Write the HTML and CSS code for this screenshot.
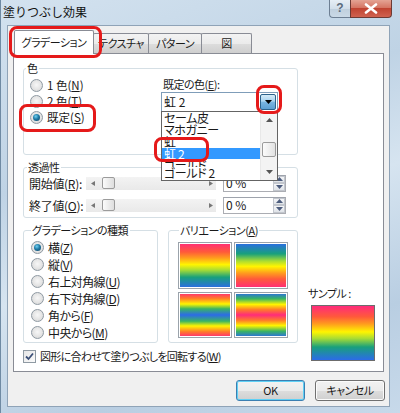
FILE: index.html
```html
<!DOCTYPE html>
<html lang="ja">
<head>
<meta charset="utf-8">
<title>塗りつぶし効果</title>
<link rel="stylesheet" href="styles.css">
</head>
<body>
<div class="window">
  <div class="titlebar">
    <span class="title">塗りつぶし効果</span>
    <div class="caption">
      <div class="cap-help">?</div>
      <div class="cap-close">
        <svg width="14" height="11" viewBox="0 0 14 11"><path d="M2 1.5 L12 9.5 M12 1.5 L2 9.5" stroke="#fff" stroke-width="2.6" stroke-linecap="round"/></svg>
      </div>
    </div>
  </div>
  <div class="client">
    <div class="tabs">
      <div class="tab active">グラデーション</div>
      <div class="tab t-tex">テクスチャ</div>
      <div class="tab t-pat">パターン</div>
      <div class="tab t-fig">図</div>
    </div>
    <div class="panel">
      <div class="main-col">
        <fieldset class="group g-color">
          <legend>色</legend>
          <div class="color-body">
            <div class="radios">
              <div class="radio"><span class="rb"></span>1&nbsp;色(<u>N</u>)</div>
              <div class="radio"><span class="rb"></span>2&nbsp;色(<u>T</u>)</div>
              <div class="radio"><span class="rb on"></span>既定(<u>S</u>)</div>
            </div>
            <div class="preset">
              <div class="preset-label">既定の色(<u>E</u>):</div>
              <div class="combo">
                <span class="combo-text">虹 2</span>
                <span class="combo-btn"><svg width="7" height="4" viewBox="0 0 7 4"><path d="M0 0 H7 L3.5 4 Z" fill="#000"/></svg></span>
              </div>
            </div>
          </div>
        </fieldset>

        <fieldset class="group g-trans">
          <legend>透過性</legend>
          <div class="trow">
            <span class="tlabel">開始値(<u>R</u>):</span>
            <div class="slider">
              <svg class="sarrow" width="4" height="5" viewBox="0 0 4 5"><path d="M4 0 V5 L0 2.5 Z" fill="#777"/></svg>
              <span class="thumb"></span>
              <span class="strack"></span>
              <svg class="sarrow" width="4" height="5" viewBox="0 0 4 5"><path d="M0 0 V5 L4 2.5 Z" fill="#777"/></svg>
            </div>
            <div class="spin">
              <span class="spin-text">0 %</span>
              <span class="spin-btns">
                <span class="sb"><svg width="7" height="4" viewBox="0 0 7 4"><path d="M0 4 H7 L3.5 0 Z" fill="#4d5d7e"/></svg></span>
                <span class="sb"><svg width="7" height="4" viewBox="0 0 7 4"><path d="M0 0 H7 L3.5 4 Z" fill="#4d5d7e"/></svg></span>
              </span>
            </div>
          </div>
          <div class="trow">
            <span class="tlabel">終了値(<u>O</u>):</span>
            <div class="slider">
              <svg class="sarrow" width="4" height="5" viewBox="0 0 4 5"><path d="M4 0 V5 L0 2.5 Z" fill="#777"/></svg>
              <span class="thumb"></span>
              <span class="strack"></span>
              <svg class="sarrow" width="4" height="5" viewBox="0 0 4 5"><path d="M0 0 V5 L4 2.5 Z" fill="#777"/></svg>
            </div>
            <div class="spin">
              <span class="spin-text">0 %</span>
              <span class="spin-btns">
                <span class="sb"><svg width="7" height="4" viewBox="0 0 7 4"><path d="M0 4 H7 L3.5 0 Z" fill="#4d5d7e"/></svg></span>
                <span class="sb"><svg width="7" height="4" viewBox="0 0 7 4"><path d="M0 0 H7 L3.5 4 Z" fill="#4d5d7e"/></svg></span>
              </span>
            </div>
          </div>
        </fieldset>

        <div class="row3">
          <fieldset class="group g-type">
            <legend>グラデーションの種類</legend>
            <div class="radio"><span class="rb on"></span>横(<u>Z</u>)</div>
            <div class="radio"><span class="rb"></span>縦(<u>V</u>)</div>
            <div class="radio"><span class="rb"></span>右上対角線(<u>U</u>)</div>
            <div class="radio"><span class="rb"></span>右下対角線(<u>D</u>)</div>
            <div class="radio"><span class="rb"></span>角から(<u>F</u>)</div>
            <div class="radio"><span class="rb"></span>中央から(<u>M</u>)</div>
          </fieldset>
          <fieldset class="group g-var">
            <legend>バリエーション(<u>A</u>)</legend>
            <div class="swatches">
              <div class="sw sw1"></div>
              <div class="sw sw2"></div>
              <div class="sw sw3"></div>
              <div class="sw sw4"></div>
            </div>
          </fieldset>
        </div>

        <div class="check">
          <span class="cb"><svg width="9" height="9" viewBox="0 0 9 9"><path d="M1 4.5 L3.5 7 L8 1.5" fill="none" stroke="#3b4f77" stroke-width="1.8"/></svg></span>
          図形に合わせて塗りつぶしを回転する(<u>W</u>)
        </div>
      </div>
      <div class="sample-col">
        <div class="sample-label">サンプル :</div>
        <div class="sample"></div>
      </div>
    </div>
    <div class="buttons">
      <div class="btn default">OK</div>
      <div class="btn">キャンセル</div>
    </div>
  </div>

  <div class="droplist">
    <div class="items">
      <div class="item">セーム皮</div>
      <div class="item">マホガニー</div>
      <div class="item">虹</div>
      <div class="item sel">虹 2</div>
      <div class="item clip">ゴールド</div>
      <div class="item">ゴールド 2</div>
    </div>
    <div class="vscroll">
      <span class="vs-btn"><svg width="7" height="4" viewBox="0 0 7 4"><path d="M0 4 H7 L3.5 0 Z" fill="#555"/></svg></span>
      <span class="vs-track"><span class="vs-thumb"></span></span>
      <span class="vs-btn"><svg width="7" height="4" viewBox="0 0 7 4"><path d="M0 0 H7 L3.5 4 Z" fill="#555"/></svg></span>
    </div>
  </div>

  <div class="mark mark-tab"></div>
  <div class="mark mark-preset"></div>
  <div class="mark mark-btn"></div>
  <div class="mark mark-item"></div>
</div>
</body>
</html>
```

FILE: styles.css
```css
html, body {
  margin: 0;
  padding: 0;
  background: #ffffff;
}
body {
  font-family: "Noto Sans CJK JP", "Liberation Sans", sans-serif;
  font-size: 11px;
  letter-spacing: -0.5px;
  color: #1a1a1a;
  font-feature-settings: "palt";
}
u { text-decoration: underline; text-underline-offset: 1px; }

.window {
  position: relative;
  width: 400px;
  height: 413px;
  box-sizing: border-box;
  display: flex;
  flex-direction: column;
  overflow: hidden;
  background: linear-gradient(160deg, #d3e2ef 0%, #bfd3e5 35%, #d6e4f0 55%, #b9cee2 80%, #c7d9ea 100%);
  border-left: 1px solid #6f8aa3;
}

/* title bar */
.titlebar {
  height: 25px;
  flex: none;
  display: flex;
  align-items: flex-start;
  justify-content: space-between;
}
.title {
  padding: 4px 0 0 2px;
  line-height: 16px;
  font-size: 12px;
  letter-spacing: 0;
  font-feature-settings: normal;
  color: #111;
}
.caption {
  display: flex;
  margin-right: 8px;
}
.cap-help {
  width: 21px;
  height: 18px;
  box-sizing: border-box;
  border: 1px solid #6d7f93;
  border-top: none;
  border-right: none;
  border-radius: 0 0 0 4px;
  background: linear-gradient(#e6eef5 0%, #d3dfea 50%, #bfcfdd 51%, #cad9e6 100%);
  color: #5b6b7c;
  font-family: "Liberation Sans", sans-serif;
  font-weight: bold;
  font-size: 12px;
  letter-spacing: 0;
  line-height: 17px;
  text-align: center;
}
.cap-close {
  width: 42px;
  height: 18px;
  box-sizing: border-box;
  border: 1px solid #6d3a34;
  border-top: none;
  border-radius: 0 0 4px 0;
  background: linear-gradient(#e4a394 0%, #d57563 45%, #c04331 50%, #d0624f 100%);
  display: flex;
  align-items: center;
  justify-content: center;
}

/* client */
.client {
  flex: 1;
  margin: 0 10px 6px 6px;
  border: 1px solid #8fa3b7;
  background: #f0f0f0;
  padding: 4px 5px 5px 5px;
  display: flex;
  flex-direction: column;
}

.tabs {
  height: 23px;
  display: flex;
  align-items: flex-end;
  padding-left: 1px;
  position: relative;
  z-index: 2;
}
.tab {
  height: 20px;
  box-sizing: border-box;
  border: 1px solid #898c95;
  border-bottom: none;
  border-radius: 2px 2px 0 0;
  background: linear-gradient(#f3f3f3 0%, #ebebeb 50%, #dddddd 51%, #cfcfcf 100%);
  text-align: center;
  line-height: 19px;
  margin-left: -1px;
}
.tab.active {
  height: 24px;
  width: 80px;
  margin-bottom: -1px;
  margin-left: 0;
  background: #ffffff;
  line-height: 22px;
  position: relative;
  z-index: 3;
}
.t-tex { width: 56px; }
.t-pat { width: 54px; }
.t-fig { width: 51px; }

.panel {
  height: 319px;
  box-sizing: border-box;
  background: #ffffff;
  border: 1px solid #898c95;
  padding: 7px 0 0 9px;
  display: flex;
}
.main-col {
  width: 275px;
  display: flex;
  flex-direction: column;
}

.group {
  margin: 0;
  padding: 0;
  border: 1px solid #d5dfe5;
  border-radius: 3px;
  min-width: 0;
  box-sizing: border-box;
}
.group legend {
  padding: 0 1px;
  margin-left: 2px;
  line-height: 14px;
  font-size: 11px;
}

/* color group */
.g-color { height: 94px; }
.color-body {
  display: flex;
  padding-top: 2px;
}
.radios {
  width: 131px;
  padding-left: 6px;
}
.radio {
  display: flex;
  align-items: center;
  height: 16px;
  line-height: 16px;
  white-space: nowrap;
}
.radios .radio { letter-spacing: 0; font-size: 11.5px; }
.rb {
  width: 11px;
  height: 11px;
  border-radius: 50%;
  border: 1px solid #8f9aa3;
  background: radial-gradient(circle at 50% 45%, #f7f7f7 0%, #e4e4e4 55%, #cfcfcf 100%);
  margin-right: 4px;
  flex: none;
  position: relative;
}
.rb.on::after {
  content: "";
  position: absolute;
  left: 2px;
  top: 2px;
  width: 7px;
  height: 7px;
  border-radius: 50%;
  background: radial-gradient(circle at 40% 35%, #6fd0f2 0%, #1f7aa5 45%, #0d3d5e 100%);
}
.preset {
  padding-top: 0;
}
.preset-label {
  line-height: 14px;
  padding-left: 2px;
}
.combo {
  margin-top: 1px;
  width: 117px;
  height: 20px;
  box-sizing: border-box;
  border: 1px solid #7f9db9;
  background: #fff;
  display: flex;
  align-items: center;
  justify-content: space-between;
}
.combo-text { padding-left: 2px; line-height: 16px; font-size: 12px; letter-spacing: 0; }
.combo-btn {
  width: 16px;
  height: 16px;
  margin-right: 1px;
  box-sizing: border-box;
  border: 1px solid #2c628b;
  border-radius: 2px;
  background: linear-gradient(#d5ebf8 0%, #a9d3ef 45%, #79b6e2 50%, #5c9fd3 100%);
  display: flex;
  align-items: center;
  justify-content: center;
}

/* transparency */
.g-trans {
  height: 58px;
  margin-top: 5px;
}
.g-trans legend { margin-left: 3px; }
.trow {
  display: flex;
  align-items: center;
  height: 16px;
  margin-top: 1px;
}
.trow + .trow { margin-top: 6px; }
.tlabel {
  width: 62px;
  padding-left: 5px;
  box-sizing: border-box;
  white-space: nowrap;
  font-size: 12px;
  letter-spacing: -0.3px;
}
.slider {
  width: 130px;
  height: 13px;
  background: linear-gradient(#f3f3f3, #e9e9e9);
  display: flex;
  align-items: center;
  padding: 0 3px 0 5px;
  box-sizing: border-box;
}
.thumb {
  width: 13px;
  height: 12px;
  margin-left: 7px;
  box-sizing: border-box;
  border: 1px solid #9b9b9b;
  border-radius: 2px;
  background: linear-gradient(90deg, #fbfbfb 0%, #ececec 50%, #dedede 100%);
}
.strack { flex: 1; }
.spin {
  margin-left: 7px;
  width: 63px;
  height: 17px;
  box-sizing: border-box;
  border: 1px solid #abadb3;
  border-top-color: #9ea3ac;
  background: #fff;
  display: flex;
  align-items: center;
  justify-content: space-between;
}
.spin-text { padding-left: 2px; line-height: 14px; font-size: 12px; letter-spacing: 0; }
.spin-btns {
  width: 12px;
  height: 15px;
  display: flex;
  flex-direction: column;
}
.sb {
  flex: 1;
  box-sizing: border-box;
  border: 1px solid #c2c6cd;
  background: linear-gradient(#f5f6f8, #dfe3e8);
  display: flex;
  align-items: center;
  justify-content: center;
}

/* row 3 */
.row3 {
  display: flex;
  gap: 10px;
  margin-top: 5px;
}
.g-type {
  width: 135px;
  height: 120px;
  padding: 2px 0 0 7px;
}
.g-type .radio { height: 17px; font-size: 12px; letter-spacing: -0.6px; }
.g-type legend { margin-left: 0; padding: 0 2px 0 1px; }
.g-var {
  width: 130px;
  height: 120px;
  padding: 5px 0 0 9px;
}
.g-var legend { margin-left: 1px; }
.swatches {
  display: grid;
  grid-template-columns: 54px 54px;
  grid-template-rows: 47px 46px;
  gap: 3px 2px;
}
.sw {
  box-sizing: border-box;
  border: 1px solid #9ba3ab;
  box-shadow: inset 0 0 0 1px #ffffff;
}
.sw1, .sample {
  background: linear-gradient(180deg, #ff2b7b 0%, #ff5a3a 20%, #ff9b1e 33%, #fff500 48%, #a8dc34 60%, #18a07c 76%, #2c6be8 100%);
}
.sw2 {
  background: linear-gradient(0deg, #ff2b7b 0%, #ff5a3a 20%, #ff9b1e 33%, #fff500 48%, #a8dc34 60%, #18a07c 76%, #2c6be8 100%);
}
.sw3 {
  background: linear-gradient(180deg, #ff2b7b 0%, #ff7a2a 12%, #fff500 25%, #39b464 36%, #2c6be8 50%, #39b464 64%, #fff500 75%, #ff7a2a 88%, #ff2b7b 100%);
}
.sw4 {
  background: linear-gradient(180deg, #2c6be8 0%, #39b464 13%, #fff500 26%, #ff7a2a 38%, #ff2b7b 50%, #ff7a2a 62%, #fff500 74%, #39b464 87%, #2c6be8 100%);
}

.check {
  display: flex;
  align-items: center;
  height: 16px;
  margin-top: 5px;
  white-space: nowrap;
  font-size: 11px;
  letter-spacing: -0.7px;
}
.cb {
  width: 11px;
  height: 11px;
  border: 1px solid #8f9aa3;
  background: linear-gradient(135deg, #e6e6e6, #fbfbfb);
  margin-right: 4px;
  display: flex;
  align-items: center;
  justify-content: center;
}

/* sample */
.sample-col {
  margin-left: 10px;
  padding-top: 225px;
}
.sample-label {
  line-height: 14px;
  white-space: nowrap;
}
.sample {
  margin: 5px 0 0 3px;
  width: 64px;
  height: 56px;
  box-sizing: border-box;
  border: 1px solid #6c6c6c;
}

/* buttons */
.buttons {
  display: flex;
  justify-content: flex-end;
  gap: 10px;
  margin-top: 8px;
  margin-right: -1px;
}
.btn {
  width: 70px;
  height: 21px;
  box-sizing: border-box;
  border: 1px solid #707070;
  border-radius: 3px;
  background: linear-gradient(#f2f2f2 0%, #ebebeb 50%, #dddddd 51%, #cfcfcf 100%);
  box-shadow: inset 0 0 0 1px #fbfbfb;
  text-align: center;
  line-height: 19px;
}
.btn.default {
  border-color: #3c7fb1;
  box-shadow: inset 0 0 0 1px #5fd0f5;
  width: 69px;
}

/* open dropdown list (overlays the dialog) */
.droplist {
  position: absolute;
  left: 160px;
  top: 111px;
  width: 117px;
  height: 70px;
  box-sizing: border-box;
  border: 1px solid #646464;
  background: #fff;
  display: flex;
  z-index: 5;
}
.items {
  flex: 1;
  padding-top: 0;
  overflow: hidden;
}
.item {
  height: 12px;
  line-height: 12px;
  padding-left: 2px;
  white-space: nowrap;
  font-size: 12px;
  letter-spacing: -0.4px;
}
.item.sel {
  height: 11px;
  background: #3399ff;
  color: #fff;
}
.item.clip {
  height: 8px;
  overflow: hidden;
}
.vscroll {
  width: 16px;
  display: flex;
  flex-direction: column;
  background: #f3f3f3;
  border-left: 1px solid #e8e8e8;
}
.vs-btn {
  height: 16px;
  display: flex;
  align-items: center;
  justify-content: center;
}
.vs-track {
  flex: 1;
  position: relative;
}
.vs-thumb {
  position: absolute;
  left: 1px;
  right: 1px;
  top: 14px;
  height: 15px;
  box-sizing: border-box;
  border: 1px solid #9b9b9b;
  border-radius: 2px;
  background: linear-gradient(90deg, #fbfbfb, #e2e2e2);
}

/* red annotation marks */
.mark {
  position: absolute;
  border: 3px solid #e51a1a;
  border-radius: 8px;
  box-sizing: border-box;
  z-index: 10;
}
.mark-tab { left: 8px; top: 26px; width: 93px; height: 32px; }
.mark-preset { left: 18px; top: 104px; width: 77px; height: 28px; }
.mark-btn { left: 255px; top: 85px; width: 26px; height: 29px; }
.mark-item { left: 153px; top: 137px; width: 55px; height: 25px; }
```
